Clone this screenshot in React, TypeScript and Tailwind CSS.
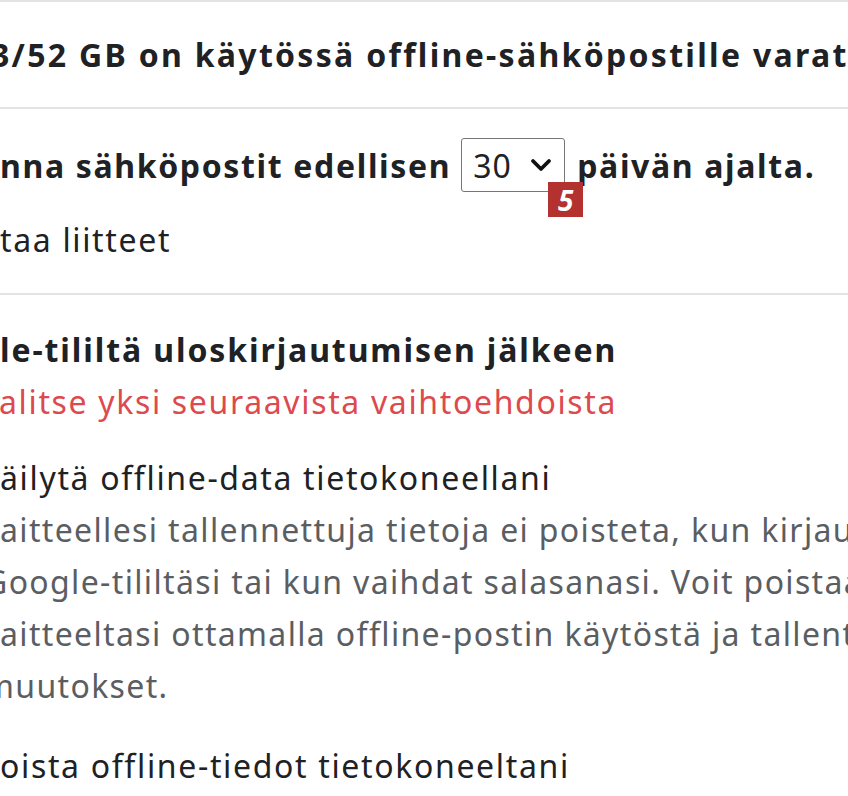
import React from "react";

const font = { fontFamily: "'Noto Sans', Roboto, 'Liberation Sans', Arial, sans-serif" };

function Divider() {
  return <div className="h-[2px] w-full shrink-0 bg-[#e3e3e3]" />;
}

export default function App() {
  return (
    <div
      className="relative flex h-[796px] w-[848px] flex-col overflow-hidden bg-white text-[32px] tracking-[1.65px] text-[#202124]"
      style={font}
    >
      <Divider />
      <section className="shrink-0 whitespace-nowrap pb-[26px] pt-[27px]">
        <div className="-ml-[9px] font-bold leading-[52px] tracking-[2.3px]">
          3/52 GB on käytössä offline-sähköpostille varattua tilaa
        </div>
      </section>
      <Divider />
      <section className="shrink-0 whitespace-nowrap pb-[27px] pt-[29px]">
        <div className="flex h-[54px] items-center">
          <span className="font-bold leading-[35px]">nna sähköpostit edellisen</span>
          <div className="relative ml-[10px] flex h-[54px] w-[104px] shrink-0 items-center rounded-[3px] border border-[#767676] pl-[11px]">
            <span className="leading-[35px] tracking-[1px] text-[#202124]">30</span>
            <svg
              className="ml-[17px]"
              width="24"
              height="14"
              viewBox="0 0 24 14"
              fill="none"
            >
              <polyline
                points="4,3 12,11 20,3"
                stroke="#111"
                strokeWidth="3.8"
                strokeLinecap="round"
                strokeLinejoin="round"
              />
            </svg>
            <div className="absolute left-[86px] top-[43px] z-10 flex h-[35px] w-[35px] items-center justify-center bg-[#b3312f]">
              <span className="text-[28px] font-bold italic leading-none tracking-normal text-white">5</span>
            </div>
          </div>
          <span className="ml-[12px] font-bold leading-[35px]">päivän ajalta.</span>
        </div>
        <div className="mt-[22px] leading-[52px] text-[#202124]">taa liitteet</div>
      </section>
      <Divider />
      <section className="shrink-0 whitespace-nowrap pt-[29px]">
        <div className="font-bold leading-[52px] tracking-[1.9px]">le-tililtä uloskirjautumisen jälkeen</div>
        <div className="-ml-[1px] leading-[52px] text-[#dd4a4e]">alitse yksi seuraavista vaihtoehdoista</div>
        <div className="mt-[24px] leading-[52px] text-[#202124]">äilytä offline-data tietokoneellani</div>
        <div className="leading-[52px] tracking-[1.35px] text-[#5a5e63]">
          <div>aitteellesi tallennettuja tietoja ei poisteta, kun kirjaudut ulos</div>
          <div className="-ml-[16px]">Google-tililtäsi tai kun vaihdat salasanasi. Voit poistaa tilin tiedot</div>
          <div>aitteeltasi ottamalla offline-postin käytöstä ja tallentamalla</div>
          <div className="-ml-[16px]">muutokset.</div>
        </div>
        <div className="mt-[28px] leading-[52px] text-[#202124]">oista offline-tiedot tietokoneeltani</div>
      </section>
    </div>
  );
}
